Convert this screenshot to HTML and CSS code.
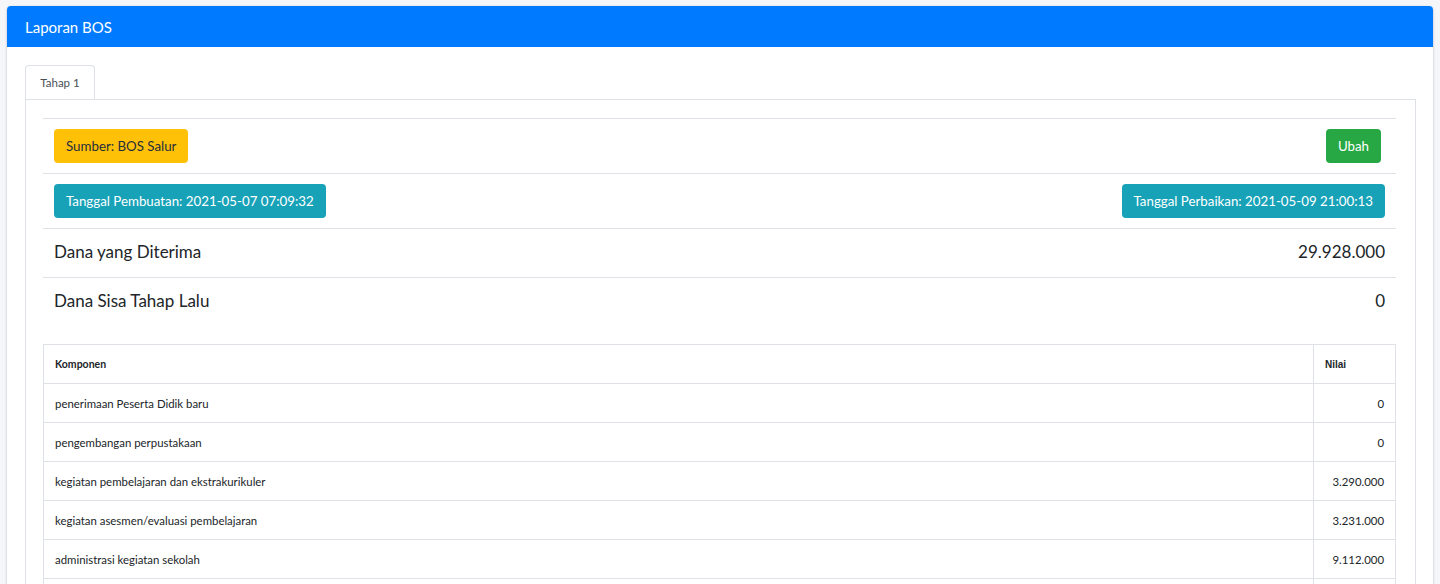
FILE: index.html
```html
<!DOCTYPE html>
<html lang="id">
<head>
<meta charset="utf-8">
<title>Laporan BOS</title>
<link rel="stylesheet" href="styles.css">
</head>
<body>
<div class="card">
  <div class="card-header">Laporan BOS</div>
  <div class="card-body">
    <div class="tabs">
      <div class="tab active">Tahap 1</div>
    </div>
    <div class="tab-content">
      <div class="info-row">
        <span class="badge badge-warning">Sumber: BOS Salur</span>
        <span class="btn btn-success">Ubah</span>
      </div>
      <div class="info-row">
        <span class="badge badge-info">Tanggal Pembuatan: 2021-05-07 07:09:32</span>
        <span class="badge badge-info">Tanggal Perbaikan: 2021-05-09 21:00:13</span>
      </div>
      <div class="info-row big">
        <span>Dana yang Diterima</span>
        <span>29.928.000</span>
      </div>
      <div class="info-row big">
        <span>Dana Sisa Tahap Lalu</span>
        <span>0</span>
      </div>
      <table class="data-table">
        <thead>
          <tr><th>Komponen</th><th class="col-val">Nilai</th></tr>
        </thead>
        <tbody>
          <tr><td>penerimaan Peserta Didik baru</td><td class="num">0</td></tr>
          <tr><td>pengembangan perpustakaan</td><td class="num">0</td></tr>
          <tr><td>kegiatan pembelajaran dan ekstrakurikuler</td><td class="num">3.290.000</td></tr>
          <tr><td>kegiatan asesmen/evaluasi pembelajaran</td><td class="num">3.231.000</td></tr>
          <tr><td>administrasi kegiatan sekolah</td><td class="num">9.112.000</td></tr>
          <tr class="blank"><td></td><td class="num"></td></tr>
        </tbody>
      </table>
    </div>
  </div>
</div>
</body>
</html>
```
FILE: styles.css
```css
html, body {
  margin: 0;
  padding: 0;
}
body {
  background: #f4f6f9;
  font-family: Lato, "Noto Sans", sans-serif;
  color: #212529;
  padding: 6px 7px 0 7px;
  overflow: hidden;
  height: 584px;
  box-sizing: border-box;
}
.card {
  background: #fff;
  border-radius: 4px 4px 0 0;
  box-shadow: 0 0 1px rgba(0,0,0,.125), 0 1px 3px rgba(0,0,0,.2);
  min-height: 700px;
}
.card-header {
  background: #007bff;
  color: #fff;
  height: 41px;
  box-sizing: border-box;
  padding: 0 18px;
  display: flex;
  align-items: center;
  font-size: 15px;
  border-radius: 4px 4px 0 0;
}
.card-body {
  padding: 18px 17px 0 18px;
}
.tabs {
  display: flex;
}
.tab {
  width: 70px;
  height: 34px;
  box-sizing: border-box;
  border: 1px solid #dee2e6;
  border-bottom: none;
  border-radius: 4px 4px 0 0;
  display: flex;
  align-items: center;
  justify-content: center;
  font-size: 11.5px;
  color: #495057;
}
.tab-content {
  border: 1px solid #dee2e6;
  padding: 18px 19px 0 17px;
}
.info-row {
  display: flex;
  justify-content: space-between;
  align-items: center;
  border-top: 1px solid #dee2e6;
  padding: 10px 11px;
}
.info-row.big {
  font-size: 17px;
  height: 45px;
  padding: 0 11px 3px;
  box-sizing: content-box;
}
.badge {
  display: inline-flex;
  align-items: center;
  height: 34px;
  padding: 0 12px;
  border-radius: 4px;
  font-size: 13.3px;
}
.badge-warning {
  background: #ffc107;
  color: #1f2d3d;
}
.badge-info {
  background: #17a2b8;
  color: #fff;
}
.btn {
  display: inline-flex;
  align-items: center;
  height: 34px;
  padding: 0 12px;
  border-radius: 4px;
  font-size: 13.3px;
  margin-right: 4px;
}
.btn-success {
  background: #28a745;
  color: #fff;
}
.data-table {
  width: 100%;
  border-collapse: collapse;
  margin-top: 18px;
  font-size: 11.4px;
  color: #212529;
}
.data-table th,
.data-table td {
  border: 1px solid #dee2e6;
  height: 39px;
  padding: 0 11px;
  text-align: left;
  box-sizing: border-box;
}
.data-table th {
  font-weight: 700;
  font-size: 10.5px;
}
.data-table th.col-val {
  width: 82px;
  font-family: "Liberation Sans", Arial, sans-serif;
  font-size: 10px;
}
.data-table td.num {
  text-align: right;
}
```
